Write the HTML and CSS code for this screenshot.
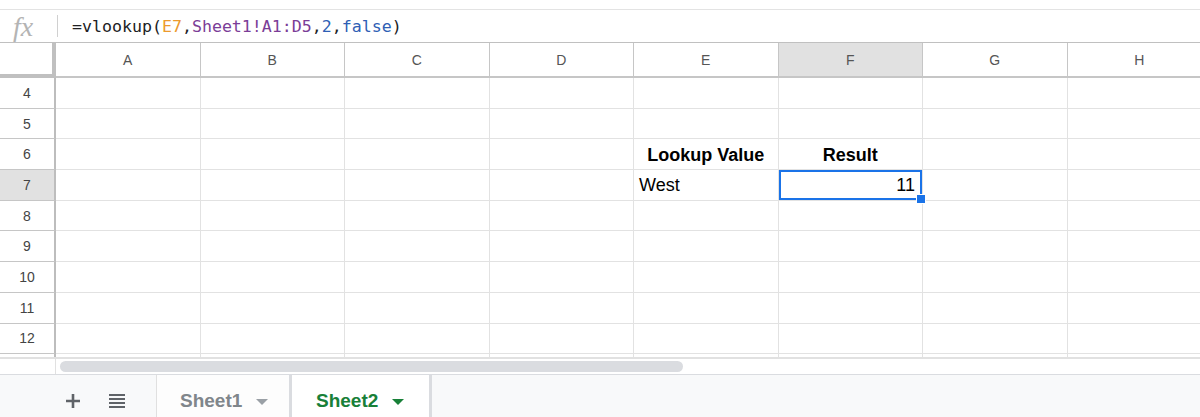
FILE: index.html
```html
<!DOCTYPE html>
<html>
<head>
<meta charset="utf-8">
<link rel="stylesheet" href="styles.css">
</head>
<body>
<div class="app">
  <div class="topgap"></div>
  <div class="formula">
    <div class="fx">fx</div>
    <div class="sep"></div>
    <div class="ftext">=vlookup(<span class="r1">E7</span>,<span class="r2">Sheet1!A1:D5</span>,<span class="num">2</span>,<span class="num">false</span>)</div>
  </div>
  <div class="sheet">
    <div class="corner"></div>
    <div class="ch">A</div><div class="ch">B</div><div class="ch">C</div><div class="ch">D</div><div class="ch">E</div><div class="ch sel">F</div><div class="ch">G</div><div class="ch">H</div>

    <div class="rh">4</div><div class="c"></div><div class="c"></div><div class="c"></div><div class="c"></div><div class="c"></div><div class="c"></div><div class="c"></div><div class="c"></div>
    <div class="rh">5</div><div class="c"></div><div class="c"></div><div class="c"></div><div class="c"></div><div class="c"></div><div class="c"></div><div class="c"></div><div class="c"></div>
    <div class="rh">6</div><div class="c"></div><div class="c"></div><div class="c"></div><div class="c"></div><div class="c bold center">Lookup Value</div><div class="c bold center">Result</div><div class="c"></div><div class="c"></div>
    <div class="rh sel">7</div><div class="c"></div><div class="c"></div><div class="c"></div><div class="c"></div><div class="c">West</div><div class="c right active">11</div><div class="c"></div><div class="c"></div>
    <div class="rh">8</div><div class="c"></div><div class="c"></div><div class="c"></div><div class="c"></div><div class="c"></div><div class="c"></div><div class="c"></div><div class="c"></div>
    <div class="rh">9</div><div class="c"></div><div class="c"></div><div class="c"></div><div class="c"></div><div class="c"></div><div class="c"></div><div class="c"></div><div class="c"></div>
    <div class="rh">10</div><div class="c"></div><div class="c"></div><div class="c"></div><div class="c"></div><div class="c"></div><div class="c"></div><div class="c"></div><div class="c"></div>
    <div class="rh">11</div><div class="c"></div><div class="c"></div><div class="c"></div><div class="c"></div><div class="c"></div><div class="c"></div><div class="c"></div><div class="c"></div>
    <div class="rh">12</div><div class="c"></div><div class="c"></div><div class="c"></div><div class="c"></div><div class="c"></div><div class="c"></div><div class="c"></div><div class="c"></div>
    <div class="rh"></div><div class="c"></div><div class="c"></div><div class="c"></div><div class="c"></div><div class="c"></div><div class="c"></div><div class="c"></div><div class="c"></div>
  </div>
  <div class="scroll">
    <div class="scroll-corner"></div>
    <div class="thumb"></div>
  </div>
  <div class="tabbar">
    <div class="tool">
      <svg width="16" height="16" viewBox="0 0 16 16"><path d="M8 1v14M1 8h14" stroke="#5f6368" stroke-width="2.6" fill="none"/></svg>
    </div>
    <div class="tool">
      <svg width="18" height="16" viewBox="0 0 18 16"><path d="M1 2h16M1 6h16M1 10h16M1 14h16" stroke="#5f6368" stroke-width="2.2" fill="none"/></svg>
    </div>
    <div class="tab">Sheet1<span class="caret"></span></div>
    <div class="tab active">Sheet2<span class="caret"></span></div>
  </div>
</div>
</body>
</html>
```
FILE: styles.css
```css
* { box-sizing: border-box; }
html, body { margin: 0; padding: 0; }
body { background: #fff; width: 1200px; height: 417px; overflow: hidden; font-family: "Liberation Sans", Arial, sans-serif; }
.app { width: 1200px; height: 417px; display: flex; flex-direction: column; }

.topgap { height: 10px; border-bottom: 1px solid #e3e3e3; flex: none; }

.formula { height: 33px; display: flex; align-items: center; flex: none; border-bottom: 1px solid #c0c0c0; }
.fx { width: 57px; text-align: center; font-family: "Liberation Serif", serif; font-style: italic; font-size: 28px; color: #b4b4b4; line-height: 1; padding-right: 11px; margin-top: 2px; }
.sep { width: 1px; height: 22px; background: #d0d0d0; }
.ftext { padding-left: 14px; font-family: "DejaVu Sans Mono", monospace; font-size: 16.6px; color: #202124; letter-spacing: 0; }
.r1 { color: #ec9a2e; }
.r2 { color: #7b3d97; }
.num { color: #2f5fb5; }

.sheet { display: grid; grid-template-columns: 56px repeat(8, 144.5px); grid-template-rows: 35px repeat(10, 30.7px); height: 316px; overflow: hidden; flex: none; border-bottom: 2px solid #e1e1e1; }
.corner { border-right: 4px solid #c0c0c0; border-bottom: 4px solid #c0c0c0; }
.ch { display: flex; align-items: center; justify-content: center; border-right: 1px solid #c6c6c6; border-bottom: 2px solid #c6c6c6; font-size: 14px; color: #555; }
.ch.sel { background: #e1e1e1; }
.rh { display: flex; align-items: center; justify-content: center; border-right: 2px solid #bdbdbd; border-bottom: 1px solid #c6c6c6; font-size: 14px; color: #444; }
.rh.sel { background: #e1e1e1; }
.c { border-right: 1px solid #e2e2e2; border-bottom: 1px solid #e2e2e2; font-size: 18px; color: #000; display: flex; align-items: center; padding: 2px 5px 0; white-space: nowrap; }
.c.bold { font-weight: bold; }
.c.center { justify-content: center; }
.c.right { justify-content: flex-end; padding-right: 7px; }
.c.active { position: relative; box-shadow: inset 0 0 0 2px #1a73e8; }
.c.active::after { content: ""; position: absolute; right: -4px; bottom: -4px; width: 8px; height: 8px; background: #1a73e8; border: 1px solid #fff; z-index: 2; }

.scroll { height: 16px; display: flex; align-items: center; flex: none; border-bottom: 1px solid #dadce0; }
.scroll-corner { width: 56px; height: 100%; border-right: 1px solid #e1e1e1; }
.thumb { margin-left: 4px; width: 623px; height: 11px; border-radius: 6px; background: #dadce0; }

.tabbar { flex: 1; background: #f8f9fa; display: flex; align-items: stretch; padding-left: 62px; }
.tool { display: flex; align-items: center; justify-content: center; width: 22px; margin-right: 22px; padding-top: 10px; }
.tool + .tool { margin-right: 28px; }
.tab { display: flex; align-items: center; padding-top: 10px; padding-left: 23px; padding-right: 20px; font-size: 19px; font-weight: bold; color: #80868b; border-left: 1px solid #e0e0e0; background: #fdfdfd; width: 133px; }
.tab .caret { margin-left: 14px; width: 0; height: 0; border-left: 6px solid transparent; border-right: 6px solid transparent; border-top: 6px solid #9aa0a6; margin-top: 2px; }
.tab.active { background: #fff; color: #188038; border-left: 3px solid #dadce0; border-right: 3px solid #dadce0; padding-left: 24px; width: 143px; }
.tab.active .caret { border-top-color: #188038; }
```
